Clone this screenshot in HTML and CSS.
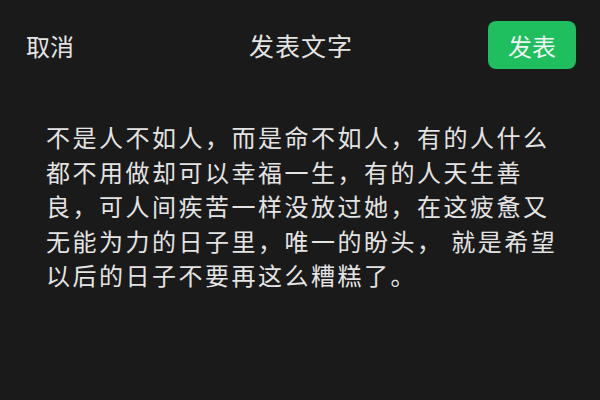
FILE: index.html
```html
<!DOCTYPE html>
<html lang="zh-CN">
<head>
    <meta charset="UTF-8">
    <title>发表文字</title>
    <link rel="stylesheet" href="styles.css">
</head>
<body>
    <div class="top-bar">
        <span class="cancel">取消</span>
        <span class="title">发表文字</span>
        <button class="post-button">发表</button>
    </div>
    <div class="post-text">不是人不如人，而是命不如人，有的人什么都不用做却可以幸福一生，有的人天生善良，可人间疾苦一样没放过她，在这疲惫又无能为力的日子里，唯一的盼头， 就是希望以后的日子不要再这么糟糕了。</div>
</body>
</html>
```

FILE: styles.css
```css
body {
    margin: 0;
    background: #1a1a1a;
    color: #e4e4e4;
    font-family: "Noto Sans CJK SC", sans-serif;
    width: 600px;
    height: 400px;
    overflow: hidden;
}
.top-bar {
    display: flex;
    align-items: center;
    justify-content: space-between;
    padding: 21px 24px 0 26px;
    height: 48px;
}
.cancel {
    font-size: 24px;
    width: 88px;
}
.title {
    font-size: 25px;
    letter-spacing: 1px;
}
.post-button {
    width: 88px;
    height: 48px;
    border: none;
    border-radius: 8px;
    background: #1fbe5e;
    color: #f4f4f4;
    font-family: "Noto Sans CJK SC", sans-serif;
    font-size: 24px;
    padding: 0;
}
.post-text {
    margin: 51px 0 0 46px;
    width: 520px;
    font-size: 24px;
    letter-spacing: 2.5px;
    line-height: 34.5px;
}
```
